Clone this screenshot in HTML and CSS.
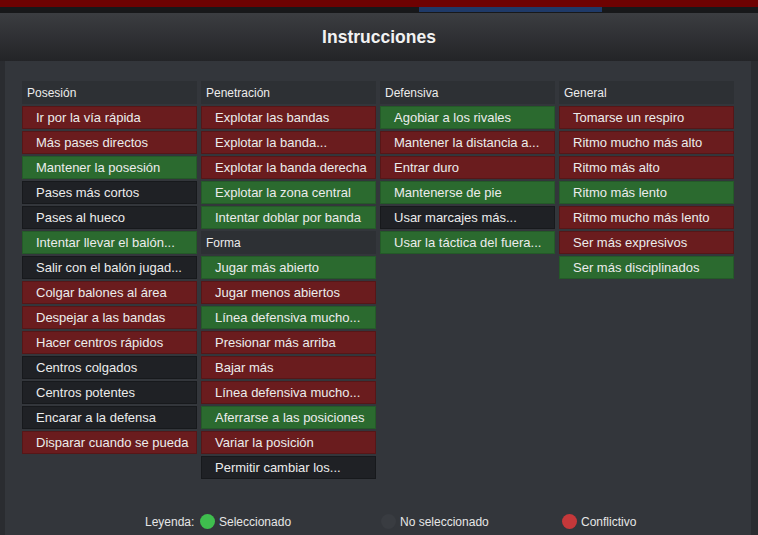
FILE: index.html
```html
<!DOCTYPE html>
<html lang="es">
<head>
    <meta charset="UTF-8">
    <meta name="viewport" content="width=device-width, initial-scale=1.0">
    <title>Instrucciones</title>
    <link rel="stylesheet" href="styles.css">
</head>
<body>
    <div class="topbar"></div>
    <div class="tabstrip"><span class="tabActive"></span></div>

    <div class="dialog">
        <header class="dialogHead">
            <h1>Instrucciones</h1>
        </header>

        <div class="panel">
            <div class="columns">
                <div class="col">
                    <div class="colHead">Posesión</div>
                    <div class="item conflict">Ir por la vía rápida</div>
                    <div class="item conflict">Más pases directos</div>
                    <div class="item selected">Mantener la posesión</div>
                    <div class="item">Pases más cortos</div>
                    <div class="item">Pases al hueco</div>
                    <div class="item selected">Intentar llevar el balón...</div>
                    <div class="item">Salir con el balón jugad...</div>
                    <div class="item conflict">Colgar balones al área</div>
                    <div class="item conflict">Despejar a las bandas</div>
                    <div class="item conflict">Hacer centros rápidos</div>
                    <div class="item">Centros colgados</div>
                    <div class="item">Centros potentes</div>
                    <div class="item">Encarar a la defensa</div>
                    <div class="item conflict">Disparar cuando se pueda</div>
                </div>

                <div class="col">
                    <div class="colHead">Penetración</div>
                    <div class="item conflict">Explotar las bandas</div>
                    <div class="item conflict">Explotar la banda...</div>
                    <div class="item conflict">Explotar la banda derecha</div>
                    <div class="item selected">Explotar la zona central</div>
                    <div class="item selected">Intentar doblar por banda</div>
                    <div class="colHead">Forma</div>
                    <div class="item selected">Jugar más abierto</div>
                    <div class="item conflict">Jugar menos abiertos</div>
                    <div class="item selected">Línea defensiva mucho...</div>
                    <div class="item conflict">Presionar más arriba</div>
                    <div class="item conflict">Bajar más</div>
                    <div class="item conflict">Línea defensiva mucho...</div>
                    <div class="item selected">Aferrarse a las posiciones</div>
                    <div class="item conflict">Variar la posición</div>
                    <div class="item">Permitir cambiar los...</div>
                </div>

                <div class="col">
                    <div class="colHead">Defensiva</div>
                    <div class="item selected">Agobiar a los rivales</div>
                    <div class="item conflict">Mantener la distancia a...</div>
                    <div class="item conflict">Entrar duro</div>
                    <div class="item selected">Mantenerse de pie</div>
                    <div class="item">Usar marcajes más...</div>
                    <div class="item selected">Usar la táctica del fuera...</div>
                </div>

                <div class="col">
                    <div class="colHead">General</div>
                    <div class="item conflict">Tomarse un respiro</div>
                    <div class="item conflict">Ritmo mucho más alto</div>
                    <div class="item conflict">Ritmo más alto</div>
                    <div class="item selected">Ritmo más lento</div>
                    <div class="item conflict">Ritmo mucho más lento</div>
                    <div class="item conflict">Ser más expresivos</div>
                    <div class="item selected">Ser más disciplinados</div>
                </div>
            </div>

            <div class="legend">
                <span class="legendLabel">Leyenda:</span>
                <span class="legendItem"><i class="dot green"></i>Seleccionado</span>
                <span class="legendItem"><i class="dot grey"></i>No seleccionado</span>
                <span class="legendItem"><i class="dot red"></i>Conflictivo</span>
            </div>
        </div>
    </div>
</body>
</html>
```

FILE: styles.css
```css
html {
    font-family: 'Liberation Sans', Arial, sans-serif;
}

body {
    margin: 0;
    background: #1b1c1e;
    color: #e9e9e9;
    height: 535px;
    overflow: hidden;
}

.topbar {
    height: 7px;
    background: #6e0202;
}

.tabstrip {
    height: 6px;
    background: #17181a;
}

.tabActive {
    display: block;
    margin-left: 419px;
    width: 183px;
    height: 5px;
    background: #1f3a68;
}

.dialog {
    background: #2a2c30;
    height: 522px;
}

.dialogHead {
    height: 48px;
    background: linear-gradient(#3b3d41, #232427);
    display: flex;
    align-items: center;
    justify-content: center;
}

h1 {
    margin: 0;
    font-size: 17.5px;
    font-weight: bold;
    color: #f2f2f2;
    padding-top: 1px;
}

.panel {
    margin: 0 7px 0 5px;
    background: #33363b;
    padding: 20px 17px 0;
    height: 454px;
}

.columns {
    display: grid;
    grid-template-columns: repeat(4, 175px);
    column-gap: 4px;
    align-items: start;
    height: 398px;
}

.col {
    display: flex;
    flex-direction: column;
    gap: 2px;
}

.colHead {
    height: 23px;
    line-height: 24px;
    padding-left: 5px;
    background: #2d3034;
    font-size: 12px;
    color: #ececec;
}

.item {
    height: 21px;
    line-height: 21px;
    padding-left: 13px;
    border: 1px solid #17191c;
    background: #1f2125;
    font-size: 13px;
    color: #ececec;
    white-space: nowrap;
    overflow: hidden;
}

.item.selected {
    background: #2b6a2f;
    border-color: #245a28;
}

.item.conflict {
    background: #6a1c1e;
    border-color: #571617;
}

.legend {
    display: flex;
    align-items: center;
    margin-top: 35px;
    padding-left: 123px;
    font-size: 12px;
    color: #e6e6e6;
}

.legendLabel {
    width: 55px;
    flex: none;
}

.legendItem {
    display: flex;
    align-items: center;
    width: 181px;
    flex: none;
}

.legendItem:last-child {
    width: auto;
}

.dot {
    width: 15px;
    height: 15px;
    border-radius: 50%;
    margin-right: 4px;
    flex: none;
}

.dot.green { background: #3fbe4e; }
.dot.grey { background: #393c41; }
.dot.red { background: #c5383a; }
```
